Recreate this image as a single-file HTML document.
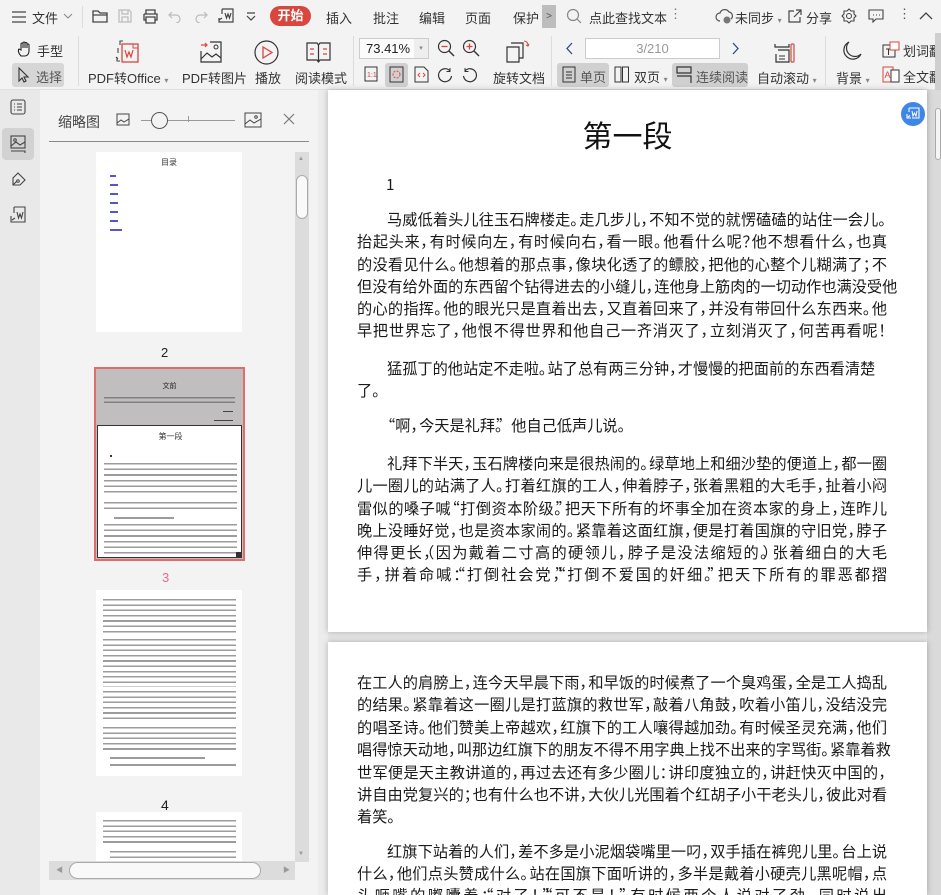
<!DOCTYPE html>
<html><head><meta charset="utf-8"><style>
*{box-sizing:border-box;margin:0;padding:0}
html,body{width:941px;height:895px;overflow:hidden}
body{background:#e6e6e6;font-family:"Liberation Sans","Noto Sans CJK SC",sans-serif;color:#222;position:relative}
.abs{position:absolute}
.tb{position:absolute;left:0;top:0;width:941px;height:90px;background:#f3f3f3;border-bottom:1px solid #e0e0e0}
.t{position:absolute;font-size:13px;color:#333;white-space:nowrap}
.ic{position:absolute}
.sep{position:absolute;width:1px;background:#dcdcdc}
.page{position:absolute;left:328px;width:599px;background:#fff;box-shadow:0 0 6px rgba(0,0,0,.25);overflow:hidden}
.ln{position:absolute;left:29px;width:530px;font-family:"Noto Sans CJK SC","Liberation Sans",sans-serif;font-size:15.2px;line-height:22px;white-space:nowrap;text-align:justify;text-align-last:justify;color:#1a1a1a}
.ln i{font-style:normal;letter-spacing:-6.5px}
.ln b{font-weight:normal;margin-left:-6.5px}
.ln.s{text-align-last:left}
.ind{left:59px;width:500px}
.th{position:absolute;background:#fff}
.g{position:absolute;opacity:.45}
</style></head><body>
<div class="tb">
 <svg class="ic" style="left:11px;top:10px" width="16" height="14"><path d="M1 2h14M1 7h14M1 12h14" stroke="#444" stroke-width="1.3"/></svg>
 <div class="t" style="left:32px;top:8px">文件</div>
 <svg class="ic" style="left:63px;top:12px" width="10" height="8"><path d="M1 2l4 4 4-4" stroke="#888" fill="none"/></svg>
 <div class="sep" style="left:82px;top:6px;height:22px"></div>
 <svg class="ic" style="left:91px;top:8px" width="18" height="16"><path d="M2 3h5l2 2h7v9H2z M2 7h14" stroke="#444" fill="none" stroke-width="1.3"/></svg>
 <svg class="ic" style="left:117px;top:8px" width="16" height="16"><path d="M2 2h10l2 2v10H2z M5 2v4h6V2 M5 14v-5h6v5" stroke="#bbb" fill="none" stroke-width="1.2"/></svg>
 <svg class="ic" style="left:142px;top:8px" width="17" height="16"><path d="M4 6V2h9v4 M2 6h13v6h-2 M4 12H2V6 M4 9h9v6H4z" stroke="#444" fill="none" stroke-width="1.3"/></svg>
 <svg class="ic" style="left:168px;top:9px" width="14" height="14"><path d="M4 3L1 6l3 3 M1 6h7a4 4 0 0 1 0 8" stroke="#bbb" fill="none" stroke-width="1.2"/></svg>
 <svg class="ic" style="left:194px;top:9px" width="14" height="14"><path d="M10 3l3 3-3 3 M13 6H6a4 4 0 0 0 0 8" stroke="#bbb" fill="none" stroke-width="1.2"/></svg>
 <svg class="ic" style="left:217px;top:7px" width="18" height="18"><path d="M5 2h11v13H7 M5 2v5 M2 11v4h5 M2 13l3-2 M8 6l1.5 5L11 7l1.5 4L14 6" stroke="#444" fill="none" stroke-width="1.2"/></svg>
 <svg class="ic" style="left:246px;top:12px" width="10" height="9"><path d="M1 1h8 M1 4l4 4 4-4" stroke="#444" fill="none" stroke-width="1.2"/></svg>
 <div class="abs" style="left:270px;top:6px;width:41px;height:20px;border-radius:10px;background:#d9463e;color:#fff;font-size:13px;text-align:center;line-height:20px;font-weight:bold">开始</div>
 <div class="t" style="left:326px;top:8px">插入</div>
 <div class="t" style="left:373px;top:8px">批注</div>
 <div class="t" style="left:419px;top:8px">编辑</div>
 <div class="t" style="left:465px;top:8px">页面</div>
 <div class="t" style="left:513px;top:8px">保护</div>
 <div class="abs" style="left:542px;top:5px;width:14px;height:23px;background:#bdbdbd;color:#555;font-size:10px;text-align:center;line-height:23px">&gt;</div>
 <svg class="ic" style="left:566px;top:8px" width="16" height="16"><circle cx="7" cy="7" r="5.5" stroke="#888" fill="none" stroke-width="1.2"/><path d="M11 11l4 4" stroke="#888" stroke-width="1.2"/></svg>
 <div class="t" style="left:589px;top:8px">点此查找文本</div>
 <div class="t" style="left:669px;top:6px;color:#777">⋮</div>
 <svg class="ic" style="left:715px;top:8px" width="20" height="16"><path d="M5 13a4 4 0 0 1 0-8 5 5 0 0 1 9-1 4 4 0 0 1 2 7" stroke="#555" fill="none" stroke-width="1.2"/><circle cx="12" cy="12" r="3.5" fill="#777"/></svg>
 <div class="t" style="left:735px;top:8px">未同步 <span style="font-size:8px;color:#888">▾</span></div>
 <svg class="ic" style="left:787px;top:8px" width="16" height="16"><path d="M7 3H2v11h11V9 M9 2h5v5 M14 2L7 9" stroke="#444" fill="none" stroke-width="1.2"/></svg>
 <div class="t" style="left:806px;top:8px">分享</div>
 <svg class="ic" style="left:841px;top:8px" width="16" height="16"><circle cx="8" cy="8" r="2.5" stroke="#444" fill="none"/><path d="M8 1l2 2h3v3l2 2-2 2v3h-3l-2 2-2-2H3v-3L1 8l2-2V3h3z" stroke="#444" fill="none" stroke-width="1.1"/></svg>
 <svg class="ic" style="left:868px;top:9px" width="16" height="14"><path d="M1 1h14v9H8l-3 3v-3H1z" stroke="#444" fill="none" stroke-width="1.1"/><path d="M5 6h1M8 6h1M11 6h1" stroke="#444"/></svg>
 <div class="t" style="left:898px;top:6px;color:#555">⋮</div>
 <svg class="ic" style="left:919px;top:11px" width="14" height="9"><path d="M1 8l6-6 6 6" stroke="#444" fill="none" stroke-width="1.3"/></svg>
 <svg class="ic" style="left:17px;top:41px" width="15" height="16"><path d="M4 15C1 12 1 9 2 8l2 1V3a1 1 0 0 1 2 0v4V2a1 1 0 0 1 2 0v5V2.5a1 1 0 0 1 2 0V7V4a1 1 0 0 1 2 0v6c0 3-2 5-4 5z" stroke="#222" fill="none" stroke-width="1.1"/></svg>
 <div class="t" style="left:37px;top:41px">手型</div>
 <div class="abs" style="left:12px;top:63px;width:52px;height:24px;background:#d6d6d6;border-radius:3px"></div>
 <svg class="ic" style="left:18px;top:67px" width="12" height="16"><path d="M1 1v13l3-3 2 4 2-1-2-4h4z" stroke="#333" fill="none" stroke-width="1.1"/></svg>
 <div class="t" style="left:36px;top:67px;color:#555">选择</div>
 <div class="sep" style="left:78px;top:36px;height:50px"></div>
 <svg class="ic" style="left:113px;top:39px" width="28" height="26"><path d="M10 2h-3v4 M5 9v5 M4 18v4h3 M3 18l2 2" stroke="#444" fill="none" stroke-width="1.1"/><rect x="9" y="5" width="16" height="18" stroke="#d9463e" fill="none" stroke-width="1.3"/><path d="M20 5v4h5" stroke="#d9463e" fill="none"/><path d="M12 11l2 7 2-5 2 5 2-7" stroke="#d9463e" fill="none" stroke-width="1.2"/></svg>
 <div class="t" style="left:88px;top:68px">PDF转Office <span style="font-size:8px;color:#888">▾</span></div>
 <svg class="ic" style="left:199px;top:40px" width="24" height="23"><path d="M2 5h6 M6 3l2 2-2 2" stroke="#d9463e" fill="none" stroke-width="1.2"/><path d="M11 2h11v20H2V11" stroke="#333" fill="none" stroke-width="1.2"/><circle cx="17" cy="7" r="2" stroke="#333" fill="none"/><path d="M2 19l6-6 5 4 4-3 5 4" stroke="#333" fill="none" stroke-width="1.2"/></svg>
 <div class="t" style="left:182px;top:68px">PDF转图片</div>
 <svg class="ic" style="left:254px;top:40px" width="25" height="25"><circle cx="12.5" cy="12.5" r="11.5" stroke="#333" fill="none" stroke-width="1.2"/><path d="M9 7l9 5.5L9 18z" stroke="#d9463e" fill="none" stroke-width="1.3"/></svg>
 <div class="t" style="left:255px;top:68px">播放</div>
 <svg class="ic" style="left:306px;top:41px" width="25" height="22"><path d="M1 2h10l1.5 2L14 2h10v17H14l-1.5 2-1.5-2H1z M12.5 4v17" stroke="#333" fill="none" stroke-width="1.2"/><path d="M4 8h4M4 13h4M17 8h4M17 13h4" stroke="#d9463e" stroke-width="1.3"/></svg>
 <div class="t" style="left:295px;top:68px">阅读模式</div>
 <div class="sep" style="left:353px;top:36px;height:50px"></div>
 <div class="abs" style="left:359px;top:38px;width:70px;height:21px;border:1px solid #ccc;background:#fbfbfb;font-size:13px;line-height:19px;padding-left:6px">73.41%<span style="position:absolute;right:0;top:0;width:14px;height:19px;background:#eee;font-size:7px;color:#888;text-align:center">▾</span></div>
 <svg class="ic" style="left:437px;top:39px" width="18" height="18"><circle cx="7.5" cy="7.5" r="6" stroke="#333" fill="none" stroke-width="1.2"/><path d="M4.5 7.5h6" stroke="#d9463e" stroke-width="1.3"/><path d="M12 12l5 5" stroke="#333" stroke-width="1.4"/></svg>
 <svg class="ic" style="left:462px;top:39px" width="18" height="18"><circle cx="7.5" cy="7.5" r="6" stroke="#333" fill="none" stroke-width="1.2"/><path d="M4.5 7.5h6M7.5 4.5v6" stroke="#d9463e" stroke-width="1.3"/><path d="M12 12l5 5" stroke="#333" stroke-width="1.4"/></svg>
 <svg class="ic" style="left:364px;top:66px" width="14" height="16"><rect x="1" y="1" width="12" height="14" stroke="#333" fill="none"/><text x="3" y="11" font-size="7" fill="#d9463e" font-family="Liberation Sans">1:1</text></svg>
 <div class="abs" style="left:385px;top:63px;width:23px;height:24px;background:#d0d0d0;border-radius:3px"></div>
 <svg class="ic" style="left:389px;top:66px" width="15" height="17"><rect x="1" y="1" width="13" height="15" stroke="#333" fill="none"/><circle cx="7.5" cy="8.5" r="3.5" stroke="#d9463e" fill="none" stroke-dasharray="2 1.3"/></svg>
 <svg class="ic" style="left:414px;top:66px" width="15" height="17"><path d="M1 1h9l4 4v11H1z" stroke="#333" fill="none"/><path d="M6 7l-2 2 2 2M9 7l2 2-2 2" stroke="#d9463e" fill="none"/></svg>
 <svg class="ic" style="left:437px;top:67px" width="16" height="16"><path d="M13 4A6.5 6.5 0 1 0 14.5 9" stroke="#333" fill="none" stroke-width="1.2"/><path d="M13 1v3.5H9.5" stroke="#333" fill="none"/></svg>
 <svg class="ic" style="left:462px;top:67px" width="16" height="16"><path d="M3 4A6.5 6.5 0 1 1 1.5 9" stroke="#333" fill="none" stroke-width="1.2"/><path d="M3 1v3.5h3.5" stroke="#333" fill="none"/></svg>
 <svg class="ic" style="left:505px;top:39px" width="26" height="25"><path d="M2 8h12v15H2z" stroke="#333" fill="none" stroke-width="1.2"/><path d="M6 4h12v15H14" stroke="#333" fill="none" stroke-width="1.2"/><path d="M19 2a4 4 0 0 1 4 4 M21 6l2 1 1-2" stroke="#d9463e" fill="none" stroke-width="1.1"/></svg>
 <div class="t" style="left:493px;top:68px">旋转文档</div>
 <div class="sep" style="left:551px;top:36px;height:50px"></div>
 <svg class="ic" style="left:565px;top:42px" width="9" height="13"><path d="M7 1L2 6.5 7 12" stroke="#2b4a8a" fill="none" stroke-width="1.3"/></svg>
 <div class="abs" style="left:585px;top:38px;width:135px;height:21px;border:1px solid #ccc;background:#fff;font-size:13px;color:#999;text-align:center;line-height:19px">3/210</div>
 <svg class="ic" style="left:731px;top:42px" width="9" height="13"><path d="M2 1l5 5.5L2 12" stroke="#2b4a8a" fill="none" stroke-width="1.3"/></svg>
 <div class="abs" style="left:557px;top:63px;width:52px;height:24px;background:#d0d0d0;border-radius:3px"></div>
 <svg class="ic" style="left:562px;top:66px" width="14" height="17"><rect x="1" y="1" width="12" height="15" stroke="#333" fill="none"/><path d="M4 6h6M4 9h6M4 12h6" stroke="#333"/></svg>
 <div class="t" style="left:580px;top:67px;color:#555">单页</div>
 <svg class="ic" style="left:614px;top:66px" width="15" height="17"><rect x="1" y="1" width="6" height="15" stroke="#333" fill="none"/><rect x="8.5" y="1" width="6" height="15" stroke="#333" fill="none"/></svg>
 <div class="t" style="left:634px;top:67px">双页 <span style="font-size:8px;color:#888">▾</span></div>
 <div class="abs" style="left:672px;top:63px;width:76px;height:24px;background:#d0d0d0;border-radius:3px"></div>
 <svg class="ic" style="left:676px;top:66px" width="16" height="17"><path d="M1 1h14v6H1z M1 10h14v7" stroke="#333" fill="none" stroke-width="1.2"/></svg>
 <div class="t" style="left:696px;top:67px;color:#555">连续阅读</div>
 <svg class="ic" style="left:774px;top:42px" width="22" height="22"><path d="M1 2v3h14V2 M4 8h11v12H2V12" stroke="#333" fill="none" stroke-width="1.2"/><path d="M5 14h6M5 17h6" stroke="#333"/><rect x="17" y="2" width="3" height="18" rx="1" stroke="#d9463e" fill="none" stroke-width="1.2"/></svg>
 <div class="t" style="left:757px;top:68px">自动滚动 <span style="font-size:8px;color:#888">▾</span></div>
 <div class="sep" style="left:825px;top:36px;height:50px"></div>
 <svg class="ic" style="left:840px;top:40px" width="22" height="22"><path d="M9 2a9 9 0 1 0 12 12A8 8 0 0 1 9 2z" stroke="#333" fill="none" stroke-width="1.2"/></svg>
 <div class="t" style="left:836px;top:68px">背景 <span style="font-size:8px;color:#888">▾</span></div>
 <svg class="ic" style="left:882px;top:41px" width="18" height="17"><rect x="1" y="4" width="12" height="12" stroke="#333" fill="none"/><path d="M4 8h5M6.5 8v6" stroke="#333"/><rect x="8" y="1" width="9" height="8" stroke="#d9463e" fill="#fff"/></svg>
 <div class="t" style="left:903px;top:41px">划词翻</div>
 <svg class="ic" style="left:882px;top:66px" width="18" height="17"><rect x="1" y="1" width="10" height="15" stroke="#d9463e" fill="none"/><text x="2.5" y="12" font-size="9" fill="#d9463e" font-family="Liberation Sans">A</text><rect x="9" y="4" width="8" height="12" stroke="#333" fill="#fff"/></svg>
 <div class="t" style="left:903px;top:67px">全文翻</div>
 <div class="abs" style="left:935px;top:33px;width:6px;height:57px;background:#cfcfcf"></div>
</div>

<div class="abs" style="left:0;top:90px;width:40px;height:805px;background:#e9e9e9"></div>
<svg class="ic" style="left:10px;top:99px" width="16" height="16"><rect x="1" y="1" width="14" height="14" rx="2" stroke="#444" fill="none" stroke-width="1.1"/><path d="M4 5h1M7 5h5M4 8h1M7 8h5M4 11h1M7 11h5" stroke="#444"/></svg>
<div class="abs" style="left:2px;top:128px;width:32px;height:32px;background:#d2d2d2;border-radius:4px"></div>
<svg class="ic" style="left:10px;top:135px" width="16" height="19"><rect x="1" y="1" width="14" height="12" stroke="#444" fill="none" stroke-width="1.1"/><circle cx="5" cy="5" r="1.3" stroke="#444" fill="none"/><path d="M1 11l5-4 4 3 5-3 M1 16h14v2" stroke="#444" fill="none" stroke-width="1.1"/></svg>
<svg class="ic" style="left:10px;top:171px" width="17" height="17"><path d="M8 2l7 7-5 5H3v-7z M3 14l4-4" stroke="#444" fill="none" stroke-width="1.1"/><circle cx="8" cy="10" r="1.3" stroke="#444" fill="none"/></svg>
<svg class="ic" style="left:9px;top:206px" width="18" height="18"><path d="M5 1h11v15H7 M5 1v6 M2 10v6h5 M3 14l3-2" stroke="#444" fill="none" stroke-width="1.1"/><path d="M8 6l1.5 6 1.5-4 1.5 4L14 6" stroke="#444" fill="none" stroke-width="1.1"/></svg>

<div class="abs" style="left:40px;top:90px;width:278px;height:805px;background:#f3f3f3"></div>
<div class="abs" style="left:318px;top:90px;width:10px;height:805px;background:#ececec"></div>
<div class="t" style="left:58px;top:112px;font-size:14px;color:#444">缩略图</div>
<svg class="ic" style="left:116px;top:113px" width="14" height="13"><rect x="1" y="1" width="12" height="11" stroke="#444" fill="none"/><path d="M1 10l4-3 3 2 5-3" stroke="#444" fill="none"/></svg>
<div class="abs" style="left:141px;top:120px;width:94px;height:1px;background:#999"></div>
<div class="abs" style="left:151px;top:112px;width:17px;height:17px;border-radius:50%;border:1.3px solid #555;background:#f3f3f3"></div>
<div class="abs" style="left:188px;top:116px;width:1px;height:6px;background:#999"></div>
<svg class="ic" style="left:244px;top:112px" width="18" height="16"><rect x="1" y="1" width="16" height="14" stroke="#444" fill="none"/><circle cx="12" cy="5" r="1.3" stroke="#444" fill="none"/><path d="M1 12l5-4 4 3 7-4" stroke="#444" fill="none"/></svg>
<svg class="ic" style="left:283px;top:113px" width="12" height="12"><path d="M1 1l10 10M11 1L1 11" stroke="#777" stroke-width="1.2"/></svg>
<div class="abs" style="left:49px;top:141px;width:260px;height:1px;background:#8a8a8a"></div>
<div class="abs" style="left:295px;top:152px;width:14px;height:710px;background:#dcdcdc"></div>
<div class="abs" style="left:296px;top:175px;width:12px;height:44px;border-radius:6px;border:1px solid #aaa;background:#f9f9f9"></div>
<div class="abs" style="left:298px;top:156px;font-size:6px;color:#999">▲</div>
<div class="abs" style="left:298px;top:851px;font-size:6px;color:#999">▼</div>
<div class="abs" style="left:49px;top:861px;width:246px;height:19px;background:#dcdcdc"></div>
<div class="abs" style="left:69px;top:862px;width:192px;height:17px;border-radius:9px;border:1px solid #aaa;background:#f9f9f9"></div>
<div class="abs" style="left:56px;top:865px;font-size:7px;color:#999">◀</div>
<div class="abs" style="left:283px;top:865px;font-size:7px;color:#999">▶</div>

<div class="th" style="left:96px;top:152px;width:146px;height:180px">
 <div class="abs" style="left:0;top:5px;width:146px;text-align:center;font-size:8px;color:#333">目录</div>
 <div class="abs" style="left:14px;top:23px;width:6px;height:2px;background:#55c"></div>
 <div class="abs" style="left:14px;top:32px;width:8px;height:2px;background:#55c"></div>
 <div class="abs" style="left:14px;top:41px;width:8px;height:2px;background:#55c"></div>
 <div class="abs" style="left:14px;top:50px;width:8px;height:2px;background:#55c"></div>
 <div class="abs" style="left:14px;top:59px;width:8px;height:2px;background:#55c"></div>
 <div class="abs" style="left:14px;top:68px;width:8px;height:2px;background:#55c"></div>
 <div class="abs" style="left:14px;top:77px;width:12px;height:2px;background:#55c"></div>
</div>
<div class="t" style="left:161px;top:345px;font-size:13px;color:#222">2</div>
<div class="abs" style="left:94px;top:367px;width:151px;height:194px;border:2px solid #e06c6c;background:#c0bebe">
 <div class="abs" style="left:0;top:12px;width:147px;text-align:center;font-size:7px;color:#222">文前</div>
 <div class="g" style="left:8px;top:28px;width:131px;height:8px;background:repeating-linear-gradient(#333 0 1.6px,transparent 1.6px 4.5px)"></div>
 <div class="abs" style="left:127px;top:42px;width:10px;height:1px;background:#444"></div>
 <div class="abs" style="left:118px;top:51px;width:19px;height:1px;background:#444"></div>
 <div class="abs" style="left:1px;top:56px;width:145px;height:133px;background:#fff;border:1px solid #333">
  <div class="abs" style="left:0;top:5px;width:145px;text-align:center;font-size:8px;color:#333">第一段</div>
  <div class="abs" style="left:12px;top:29px;width:2px;height:2px;background:#333"></div>
  <div class="g" style="left:6px;top:37px;width:133px;height:32px;background:repeating-linear-gradient(#222 0 1.6px,transparent 1.6px 5.6px)"></div>
  <div class="g" style="left:6px;top:76px;width:133px;height:10px;background:repeating-linear-gradient(#222 0 1.6px,transparent 1.6px 5.6px)"></div>
  <div class="g" style="left:16px;top:91px;width:60px;height:2px;background:#222"></div>
  <div class="g" style="left:6px;top:98px;width:133px;height:31px;background:repeating-linear-gradient(#222 0 1.6px,transparent 1.6px 5.6px)"></div>
  <div class="abs" style="right:0;bottom:0;width:5px;height:5px;background:#333"></div>
 </div>
</div>
<div class="t" style="left:162px;top:570px;font-size:13px;color:#e46a9a">3</div>
<div class="th" style="left:96px;top:590px;width:146px;height:186px">
 <div class="g" style="left:7px;top:9px;width:133px;height:36px;background:repeating-linear-gradient(#222 0 1.6px,transparent 1.6px 5.3px)"></div>
 <div class="g" style="left:7px;top:49px;width:133px;height:48px;background:repeating-linear-gradient(#222 0 1.6px,transparent 1.6px 5.3px)"></div>
 <div class="g" style="left:7px;top:101px;width:133px;height:32px;background:repeating-linear-gradient(#222 0 1.6px,transparent 1.6px 5.3px)"></div>
 <div class="g" style="left:7px;top:137px;width:133px;height:26px;background:repeating-linear-gradient(#222 0 1.6px,transparent 1.6px 5.3px)"></div>
 <div class="g" style="left:14px;top:167px;width:95px;height:2px;background:#222"></div>
 <div class="g" style="left:14px;top:174px;width:126px;height:2px;background:#222"></div>
</div>
<div class="t" style="left:161px;top:797px;font-size:14px;color:#222">4</div>
<div class="th" style="left:96px;top:812px;width:146px;height:49px">
 <div class="g" style="left:7px;top:8px;width:133px;height:26px;background:repeating-linear-gradient(#222 0 1.6px,transparent 1.6px 5.3px)"></div>
 <div class="g" style="left:14px;top:39px;width:126px;height:10px;background:repeating-linear-gradient(#222 0 1.6px,transparent 1.6px 5.3px)"></div>
</div>

<div class="abs" style="left:927px;top:90px;width:14px;height:805px;background:#dadada"></div>
<div class="abs" style="left:935px;top:108px;width:6px;height:52px;border-radius:4px;border:1px solid #aaa;background:#f5f5f5"></div>

<div class="page" style="top:90px;height:542px">
 <div class="abs" style="left:0;top:22px;width:599px;text-align:center;font-size:30px;color:#111;font-family:'Noto Sans CJK SC',sans-serif">第一段</div>
 <div class="ln s" style="left:58px;top:83px">1</div>
 <div class="ln ind" style="top:118px">马威低着头儿往玉石牌楼走<i>。</i>走几步儿<i>，</i>不知不觉的就愣磕磕的站住一会儿<i>。</i></div>
 <div class="ln" style="top:140px">抬起头来<i>，</i>有时候向左<i>，</i>有时候向右<i>，</i>看一眼<i>。</i>他看什么呢<i>？</i>他不想看什么<i>，</i>也真</div>
 <div class="ln" style="top:163px">的没看见什么<i>。</i>他想着的那点事<i>，</i>像块化透了的鳔胶<i>，</i>把他的心整个儿糊满了<i>；</i>不</div>
 <div class="ln" style="top:185px">但没有给外面的东西留个钻得进去的小缝儿<i>，</i>连他身上筋肉的一切动作也满没受他</div>
 <div class="ln" style="top:207px">的心的指挥<i>。</i>他的眼光只是直着出去<i>，</i>又直着回来了<i>，</i>并没有带回什么东西来<i>。</i>他</div>
 <div class="ln" style="top:229px">早把世界忘了<i>，</i>他恨不得世界和他自己一齐消灭了<i>，</i>立刻消灭了<i>，</i>何苦再看呢<i>！</i></div>
 <div class="ln ind" style="top:267px;width:487px">猛孤丁的他站定不走啦<i>。</i>站了总有两三分钟<i>，</i>才慢慢的把面前的东西看清楚</div>
 <div class="ln s" style="top:289px">了<i>。</i></div>
 <div class="ln ind s" style="top:324px;left:52px">“啊<i>，</i>今天是礼拜<i>。</i>”他自己低声儿说<i>。</i></div>
 <div class="ln ind" style="top:362px">礼拜下半天<i>，</i>玉石牌楼向来是很热闹的<i>。</i>绿草地上和细沙垫的便道上<i>，</i>都一圈</div>
 <div class="ln" style="top:384px">儿一圈儿的站满了人<i>。</i>打着红旗的工人<i>，</i>伸着脖子<i>，</i>张着黑粗的大毛手<i>，</i>扯着小闷</div>
 <div class="ln" style="top:407px">雷似的嗓子喊<b>“</b>打倒资本阶级<i>。</i><i>”</i>把天下所有的坏事全加在资本家的身上<i>，</i>连昨儿</div>
 <div class="ln" style="top:429px">晚上没睡好觉<i>，</i>也是资本家闹的<i>。</i>紧靠着这面红旗<i>，</i>便是打着国旗的守旧党<i>，</i>脖子</div>
 <div class="ln" style="top:451px">伸得更长<i>，</i><b>（</b>因为戴着二寸高的硬领儿<i>，</i>脖子是没法缩短的<i>。</i><i>）</i>张着细白的大毛</div>
 <div class="ln" style="top:473px">手<i>，</i>拼着命喊<i>：</i><b>“</b>打倒社会党<i>，</i><i>”</i><b>“</b>打倒不爱国的奸细<i>。</i><i>”</i>把天下所有的罪恶都摺</div>
</div>

<div class="page" style="top:642px;height:253px">
 <div class="ln" style="top:29px">在工人的肩膀上<i>，</i>连今天早晨下雨<i>，</i>和早饭的时候煮了一个臭鸡蛋<i>，</i>全是工人捣乱</div>
 <div class="ln" style="top:51px">的结果<i>。</i>紧靠着这一圈儿是打蓝旗的救世军<i>，</i>敲着八角鼓<i>，</i>吹着小笛儿<i>，</i>没结没完</div>
 <div class="ln" style="top:74px">的唱圣诗<i>。</i>他们赞美上帝越欢<i>，</i>红旗下的工人嚷得越加劲<i>。</i>有时候圣灵充满<i>，</i>他们</div>
 <div class="ln" style="top:96px">唱得惊天动地<i>，</i>叫那边红旗下的朋友不得不用字典上找不出来的字骂街<i>。</i>紧靠着救</div>
 <div class="ln" style="top:119px">世军便是天主教讲道的<i>，</i>再过去还有多少圈儿<i>：</i>讲印度独立的<i>，</i>讲赶快灭中国的<i>，</i></div>
 <div class="ln" style="top:141px">讲自由党复兴的<i>；</i>也有什么也不讲<i>，</i>大伙儿光围着个红胡子小干老头儿<i>，</i>彼此对看</div>
 <div class="ln s" style="top:163px">着笑<i>。</i></div>
 <div class="ln ind" style="top:198px">红旗下站着的人们<i>，</i>差不多是小泥烟袋嘴里一叼<i>，</i>双手插在裤兜儿里<i>。</i>台上说</div>
 <div class="ln" style="top:220px">什么<i>，</i>他们点头赞成什么<i>。</i>站在国旗下面听讲的<i>，</i>多半是戴着小硬壳儿黑呢帽<i>，</i>点</div>
 <div class="ln" style="top:242px">头咂嘴的嘟囔着<i>：</i><b>“</b>对了<i>！</i><i>”</i><b>“</b>可不是<i>！</i><i>”</i>有时候两个人说对了劲<i>，</i>同时说出</div>
</div>

<div class="abs" style="left:901px;top:102px;width:24px;height:24px;border-radius:50%;background:#3f86e8"></div>
<svg class="ic" style="left:905px;top:106px" width="16" height="16"><path d="M4 2h10v10H7 M4 2v4 M2 8v4h4 M3 11l2-1.5" stroke="#fff" fill="none" stroke-width="1.1"/><path d="M7 5l1 5 1.5-3 1.5 3 1-5" stroke="#fff" fill="none"/></svg>
</body></html>
